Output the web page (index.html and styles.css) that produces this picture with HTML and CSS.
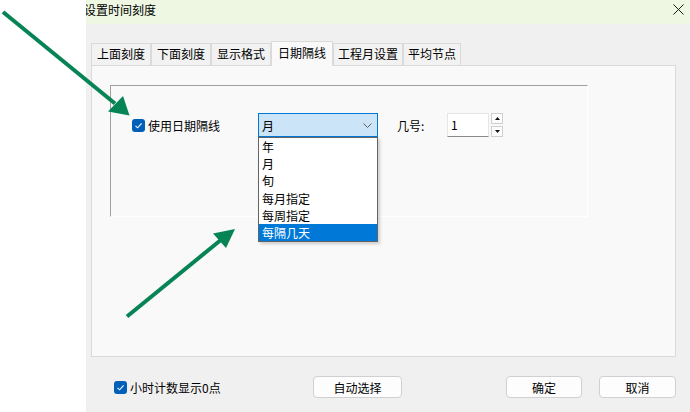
FILE: index.html
```html
<!DOCTYPE html>
<html lang="zh-CN">
<head>
  <meta charset="UTF-8">
  <title>设置时间刻度</title>
  <link rel="stylesheet" href="styles.css">
</head>
<body>

  <div class="screen">
    <div class="gutter"></div>

    <div class="dialog">
      <!-- Title bar -->
      <div class="titlebar">
        <span class="title">设置时间刻度</span>
        <svg class="close" width="11" height="11" viewBox="0 0 11 11">
          <path d="M0.5 0.5 L10.5 10.5 M10.5 0.5 L0.5 10.5" stroke="#1a1a1a" stroke-width="1" fill="none"/>
        </svg>
      </div>

      <div class="dialog-body">
        <!-- Tabs -->
        <div class="tabs">
          <div class="tab">上面刻度</div>
          <div class="tab">下面刻度</div>
          <div class="tab">显示格式</div>
          <div class="tab active">日期隔线</div>
          <div class="tab tab-narrow">工程月设置</div>
          <div class="tab tab-narrow">平均节点</div>
        </div>

        <div class="panel">
          <div class="group">
            <div class="row">
              <label class="check check-wide">
                <span class="box">
                  <svg width="9" height="9" viewBox="0 0 9 9"><polyline points="1.5,4.8 3.6,6.8 7.6,2.4" stroke="#fff" stroke-width="1.1" fill="none"/></svg>
                </span>
                使用日期隔线
              </label>

              <div class="combo">
                <span>月</span>
                <svg width="9" height="5" viewBox="0 0 9 5"><polyline points="0.5,0.5 4.5,4.5 8.5,0.5" stroke="#606060" stroke-width="1" fill="none"/></svg>
                <ul class="dropdown">
                  <li>年</li>
                  <li>月</li>
                  <li>旬</li>
                  <li>每月指定</li>
                  <li>每周指定</li>
                  <li class="selected">每隔几天</li>
                </ul>
              </div>

              <span class="field-label">几号:</span>
              <div class="spin-input">1</div>
              <div class="spin-buttons">
                <span class="spin-btn"><svg width="5" height="3" viewBox="0 0 5 3"><polygon points="2.5,0 5,3 0,3" fill="#111"/></svg></span>
                <span class="spin-btn"><svg width="5" height="3" viewBox="0 0 5 3"><polygon points="0,0 5,0 2.5,3" fill="#111"/></svg></span>
              </div>
            </div>
          </div>
        </div>

        <!-- Footer -->
        <div class="footer">
          <label class="check check-footer">
            <span class="box">
              <svg width="9" height="9" viewBox="0 0 9 9"><polyline points="1.5,4.8 3.6,6.8 7.6,2.4" stroke="#fff" stroke-width="1.1" fill="none"/></svg>
            </span>
            小时计数显示0点
          </label>
          <button class="btn btn-auto">自动选择</button>
          <div class="spacer"></div>
          <button class="btn btn-ok">确定</button>
          <button class="btn btn-cancel">取消</button>
        </div>
      </div>
    </div>

    <!-- Annotation arrows -->
    <svg class="arrows" width="690" height="412" viewBox="0 0 690 412">
      <line x1="3" y1="12" x2="115" y2="103.5" stroke="#078456" stroke-width="4"/>
      <polygon points="129.5,115.5 108,111.5 123,96" fill="#078456"/>
      <line x1="127" y1="316.5" x2="222" y2="239" stroke="#078456" stroke-width="4"/>
      <polygon points="235,229 213,233.5 226,248" fill="#078456"/>
    </svg>
  </div>

</body>
</html>
```

FILE: styles.css
```css
body {
  margin: 0;
  font-family: "Noto Sans CJK SC", "Noto Sans", sans-serif;
  font-size: 12px;
  color: #000;
  background: #fff;
}

.screen {
  position: relative;
  width: 690px;
  height: 412px;
  display: flex;
  overflow: hidden;
}

.gutter {
  width: 86px;
  flex-shrink: 0;
  background: #fff;
}

.dialog {
  flex: 1;
  background: #f0f0f0;
  display: flex;
  flex-direction: column;
}

.titlebar {
  height: 24px;
  background: #edf7e1;
  display: flex;
  align-items: flex-start;
  justify-content: space-between;
  overflow: hidden;
}

.title {
  margin-left: -2px;
  padding-top: 1px;
  line-height: 18px;
}

.close {
  margin-top: 4px;
  margin-right: 6px;
}

.dialog-body {
  padding: 17px 14px 0 5px;
}

/* Tabs */
.tabs {
  display: flex;
  align-items: flex-end;
  height: 24px;
}

.tab {
  box-sizing: border-box;
  height: 22px;
  line-height: 20px;
  padding: 0 5px;
  border: 1px solid #dadada;
  border-bottom: none;
  background: #f2f2f2;
}

.tab-narrow {
  padding: 0 4px;
}

.tab.active {
  position: relative;
  z-index: 1;
  height: 25px;
  margin-bottom: -1px;
  padding: 0 6px;
  line-height: 22px;
  background: #f9f9f9;
}

.panel {
  box-sizing: border-box;
  height: 292px;
  border: 1px solid #dadada;
  background: #f9f9f9;
  padding: 19px 0 0 18px;
}

.group {
  box-sizing: border-box;
  width: 478px;
  height: 132px;
  border-top: 1px solid #a0a0a0;
  border-left: 1px solid #a0a0a0;
  border-right: 1px solid #fff;
  border-bottom: 1px solid #fff;
  padding: 27px 0 0 21px;
}

.row {
  display: flex;
  align-items: center;
  height: 24px;
}

.check {
  display: flex;
  align-items: center;
  gap: 3px;
}

.check-wide {
  width: 126px;
}

.box {
  width: 13px;
  height: 13px;
  border-radius: 3px;
  background: #005fb8;
  display: flex;
  align-items: center;
  justify-content: center;
}

/* Combo box */
.combo {
  position: relative;
  box-sizing: border-box;
  width: 120px;
  height: 24px;
  border: 1px solid #0078d7;
  background: #cce4f7;
  display: flex;
  align-items: center;
  justify-content: space-between;
  padding: 0 5px 0 3px;
}

.dropdown {
  position: absolute;
  left: -1px;
  top: 23px;
  width: 120px;
  box-sizing: border-box;
  margin: 0;
  padding: 0;
  list-style: none;
  border: 1px solid #646464;
  background: #fff;
  box-shadow: 2px 2px 3px rgba(0, 0, 0, 0.18);
  z-index: 2;
}

.dropdown li {
  height: 17.2px;
  line-height: 17.2px;
  padding-left: 3px;
}

.dropdown li.selected {
  background: #0078d7;
  color: #fff;
}

.field-label {
  margin-left: 19px;
  width: 50px;
}

.spin-input {
  box-sizing: border-box;
  width: 42px;
  height: 24px;
  line-height: 22px;
  padding-left: 3px;
  background: #fff;
  border: 1px solid #e6e6e6;
  border-bottom-color: #8a8a8a;
}

.spin-buttons {
  margin-left: 2px;
  display: flex;
  flex-direction: column;
  gap: 2px;
}

.spin-btn {
  box-sizing: border-box;
  width: 12px;
  height: 11px;
  border: 1px solid #cfcfcf;
  background: #fdfdfd;
  display: flex;
  align-items: center;
  justify-content: center;
}

/* Footer */
.footer {
  margin-top: 19px;
  height: 22px;
  display: flex;
  align-items: center;
  padding-left: 23px;
}

.check-footer {
  width: 199px;
}

.spacer {
  flex: 1;
}

.btn {
  box-sizing: border-box;
  height: 22px;
  padding: 0;
  font-family: inherit;
  font-size: 12px;
  color: #000;
  background: #fdfdfd;
  border: 1px solid #d0d0d0;
  border-radius: 4px;
}

.btn-auto {
  width: 89px;
}

.btn-ok {
  width: 76px;
}

.btn-cancel {
  width: 77px;
  margin-left: 17px;
}

.arrows {
  position: absolute;
  left: 0;
  top: 0;
  pointer-events: none;
}
```
